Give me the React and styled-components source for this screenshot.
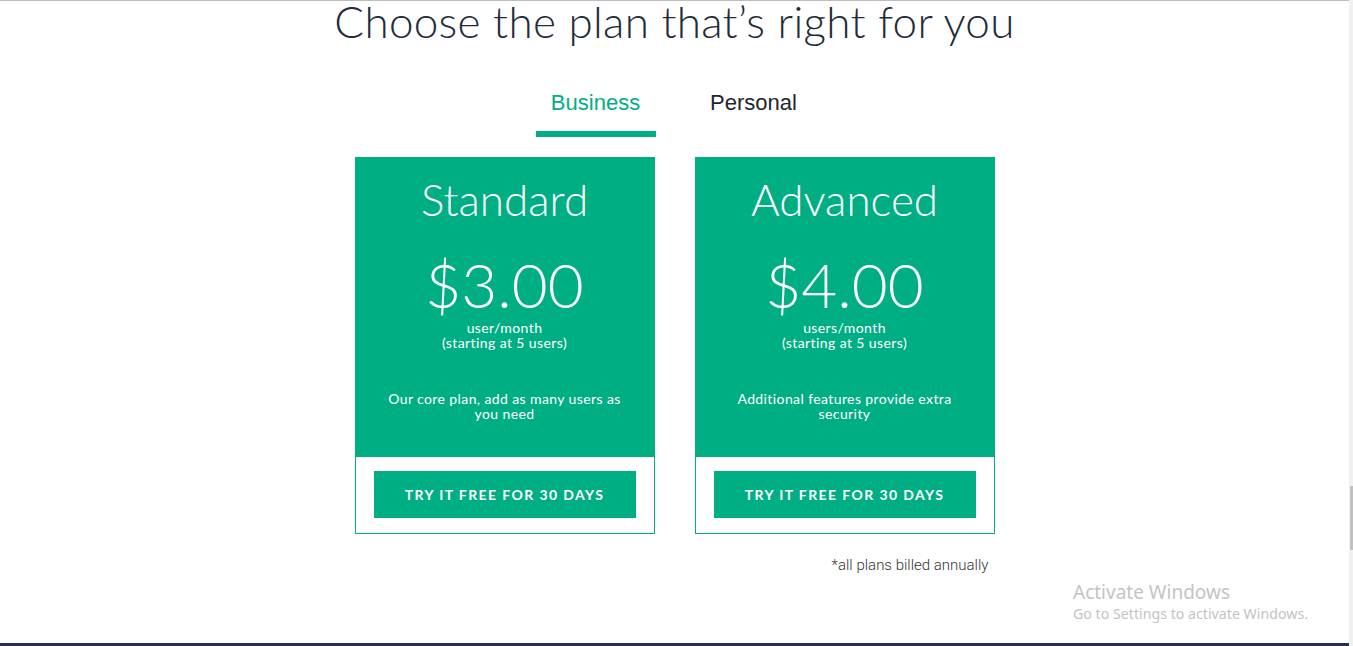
import React from 'react'
import styled, { createGlobalStyle } from 'styled-components'

const GlobalStyle = createGlobalStyle`
  html, body {
    margin: 0;
    padding: 0;
    background: #fff;
    overflow: hidden;
  }
`;

const green = '#00ae84';

const Screen = styled.div`
  display: flex;
  height: 646px;
  width: 1353px;
  position: relative;
`;

const Page = styled.div`
  flex: 1;
  display: flex;
  flex-direction: column;
  border-top: 1px solid #bdbdbd;
  font-family: Lato, "Open Sans", sans-serif;
`;

const Title = styled.h1`
  margin: 0;
  font-size: 44px;
  line-height: 40px;
  font-weight: 300;
  color: #222b3a;
  text-align: center;
  letter-spacing: 0.3px;
`;

const Tabs = styled.div`
  display: flex;
  justify-content: center;
  gap: 38px;
  margin-top: 47px;
`;

const Tab = styled.div`
  width: 120px;
  text-align: center;
  font-family: "Liberation Sans", Arial, sans-serif;
  font-size: 22px;
  line-height: 30px;
  color: ${p => (p.$active ? green : '#1e2533')};
  padding-bottom: 13px;
  border-bottom: 6px solid ${p => (p.$active ? green : 'transparent')};
`;

const Plans = styled.div`
  width: 640px;
  margin: 20px auto 0;
`;

const Cards = styled.div`
  display: flex;
  gap: 40px;
`;

const Card = styled.div`
  width: 300px;
`;

const Head = styled.div`
  height: 300px;
  background: ${green};
  color: #fff;
  display: flex;
  flex-direction: column;
  align-items: center;
  text-align: center;
  padding-top: 17px;
  box-sizing: border-box;
`;

const PlanName = styled.div`
  font-size: 44px;
  line-height: 50px;
  font-weight: 300;
`;

const Price = styled.div`
  margin-top: 30px;
  font-size: 62px;
  line-height: 60px;
  font-weight: 300;
`;

const Small = styled.div`
  font-size: 14px;
  line-height: 15px;
  letter-spacing: 0.4px;
  margin-top: ${p => p.$gap || 0}px;
  padding: 0 26px;
`;

const Foot = styled.div`
  border: 1px solid ${green};
  border-top: none;
  padding: 14px 18px 15px;
`;

const TryButton = styled.button`
  display: block;
  width: 100%;
  height: 47px;
  border: none;
  background: ${green};
  color: #fff;
  font-family: Lato, sans-serif;
  font-weight: 700;
  font-size: 14px;
  letter-spacing: 1.4px;
  padding-top: 0;
  padding-bottom: 1px;
  cursor: pointer;
`;

const Note = styled.div`
  margin-top: 22px;
  padding-right: 6px;
  text-align: right;
  font-family: Roboto, sans-serif;
  font-weight: 300;
  font-size: 15px;
  color: #333;
`;

const BottomBar = styled.div`
  margin-top: auto;
  height: 3px;
  background: #2b2b4b;
`;

const Scrollbar = styled.div`
  width: 4px;
  background: #f1f1f1;
  display: flex;
  flex-direction: column;
`;

const Thumb = styled.div`
  margin: 486px 0 0 1px;
  height: 64px;
  background: #c1c1c1;
`;

const Watermark = styled.div`
  position: absolute;
  left: 1073px;
  top: 580px;
  color: #c4c4c4;
  font-family: "Noto Sans", "Open Sans", sans-serif;
`;

const WmTitle = styled.div`
  font-size: 19px;
  line-height: 24px;
`;

const WmText = styled.div`
  font-size: 14.2px;
  line-height: 20px;
`;

const plans = [
  {
    name: 'Standard',
    price: '$3.00',
    unit: 'user/month',
    desc: 'Our core plan, add as many users as you need',
  },
  {
    name: 'Advanced',
    price: '$4.00',
    unit: 'users/month',
    desc: 'Additional features provide extra security',
  },
];

const App = () => {
  return (
    <Screen>
      <GlobalStyle />
      <Page>
        <Title>Choose the plan that’s right for you</Title>
        <Tabs>
          <Tab $active>Business</Tab>
          <Tab>Personal</Tab>
        </Tabs>
        <Plans>
          <Cards>
            {plans.map(plan => (
              <Card key={plan.name}>
                <Head>
                  <PlanName>{plan.name}</PlanName>
                  <Price>{plan.price}</Price>
                  <Small $gap={6}>
                    {plan.unit}
                    <br />
                    (starting at 5 users)
                  </Small>
                  <Small $gap={41}>{plan.desc}</Small>
                </Head>
                <Foot>
                  <TryButton>TRY IT FREE FOR 30 DAYS</TryButton>
                </Foot>
              </Card>
            ))}
          </Cards>
          <Note>*all plans billed annually</Note>
        </Plans>
        <BottomBar />
      </Page>
      <Scrollbar>
        <Thumb />
      </Scrollbar>
      <Watermark>
        <WmTitle>Activate Windows</WmTitle>
        <WmText>Go to Settings to activate Windows.</WmText>
      </Watermark>
    </Screen>
  );
};

export default App;
